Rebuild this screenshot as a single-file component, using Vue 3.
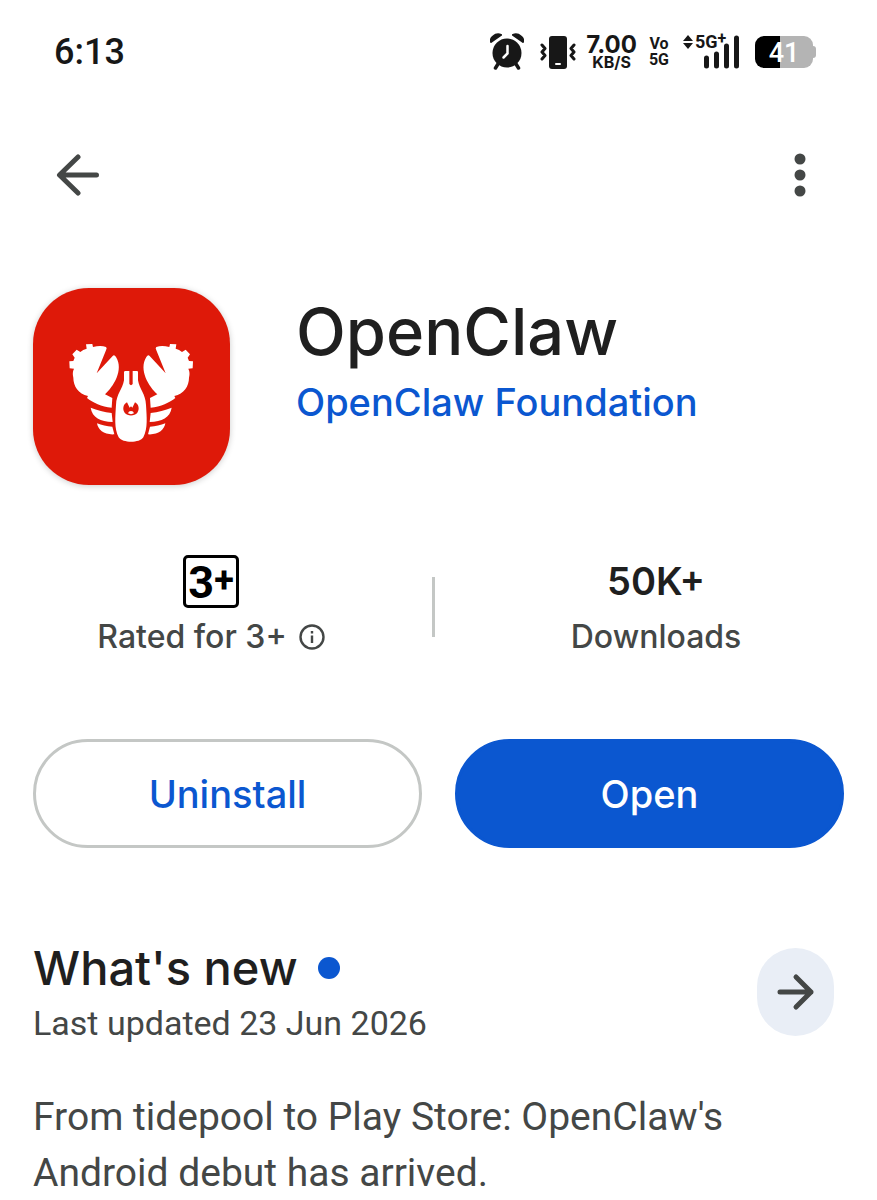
<template>
  <main class="page">
    <header class="status">
      <time class="clock">6:13</time>
      <div class="indicators">
        <svg class="alarm" viewBox="0 0 34 38" aria-label="Alarm">
          <path d="M1 9Q0 6 3 3.500Q7 0 11 2Z M33 9Q34 6 31 3.500Q27 0 23 2Z" fill="#171717" stroke="#171717" stroke-width="2" stroke-linejoin="round" />
          <path d="M8 31L5.500 35M26 31L28.500 35" stroke="#171717" stroke-width="3.500" stroke-linecap="round" />
          <circle cx="17" cy="20" r="14.500" fill="#171717" />
          <path d="M17.500 13V20.500L13.500 24.500" fill="none" stroke="#fff" stroke-width="2.500" stroke-linecap="round" />
        </svg>
        <svg class="vibrate" viewBox="0 0 36 34" aria-label="Vibrate">
          <rect x="9" y="1" width="18" height="33" rx="3" fill="#171717" />
          <rect x="15" y="28" width="6" height="2" rx="1" fill="#fff" />
          <path d="M2 10L5 13.500L2 17L5 20.500L2 24M34 10L31 13.500L34 17L31 20.500L34 24" fill="none" stroke="#171717" stroke-width="3" stroke-linecap="round" stroke-linejoin="round" />
        </svg>
        <div class="speed">
          <span class="rate">7.00</span>
          <span class="unit">KB/S</span>
        </div>
        <div class="volte">
          <span>Vo</span>
          <span>5G</span>
        </div>
        <div class="network">
          <svg class="signal" viewBox="0 0 58 36" aria-label="Signal">
            <path d="M5 1L10 7H0Z M5 15L10 9H0Z" fill="#171717" />
            <path d="M23.500 24V32M33.500 20V32M43.500 12V32M53.500 4V32" stroke="#171717" stroke-width="5" stroke-linecap="round" />
          </svg>
          <span class="generation">5G<sup>+</sup></span>
        </div>
        <div class="battery"><span>41</span></div>
      </div>
    </header>

    <nav class="toolbar">
      <button class="iconButton" type="button" aria-label="Back">
        <svg class="back" viewBox="0 0 44 44">
          <path d="M40.500 22H4M22 4L3.500 22L22 40" />
        </svg>
      </button>
      <button class="iconButton" type="button" aria-label="More options">
        <svg class="more" viewBox="0 0 12 44">
          <circle cx="6" cy="6" r="5.500" />
          <circle cx="6" cy="22" r="5.500" />
          <circle cx="6" cy="38" r="5.500" />
        </svg>
      </button>
    </nav>

    <section class="app">
      <div class="logo">
        <svg viewBox="0 0 591 591" aria-label="OpenClaw logo">
          <g transform="translate(81 141)" fill="#fff">
            <g v-for="side in sides" :key="side" :transform="side">
              <path d="M78 28L97 27L99 36Q122 30 138 36Q142 39 138 46L110 115L158 63Q163 58 168 66C192 105 160 155 135 178L157 189L155 218C125 215 98 203 81 189L84 183C55 177 40 153 40 128Q36 113 42 101L29 100L28 79L40 78L44 68L37 58L50 44L61 51Q69 44 80 41Z" />
              <path d="M92 218C112 226 132 231 155 234L158 261C121 260 97 248 92 218Z" />
              <path d="M111 265C125 270 140 274 157 275L163 298C133 300 114 285 111 265Z" />
            </g>
            <path d="M196 108H208V147Q213 154 218 147V108H231Q234 108 234 112V136C238 162 257 177 258 210C260 245 264 280 250 307C239 325 188 325 176 307C162 280 166 245 168 210C169 177 188 162 192 136V112Q192 108 196 108Z" />
            <path d="M201 202C189 208 187 224 194 233C203 244 223 244 232 233C239 224 237 208 225 202L217 218L213 214L209 218Z" fill="#de1909" />
            <path d="M204 235Q206 228 213 228Q220 228 222 235Q213 240 204 235Z" />
          </g>
        </svg>
      </div>
      <div class="names">
        <h1>OpenClaw</h1>
        <a href="#developer">OpenClaw Foundation</a>
      </div>
    </section>

    <section class="stats">
      <div class="stat rating">
        <div class="badge">3<span>+</span></div>
        <div class="label">
          Rated for 3+
          <svg class="info" viewBox="0 0 26 26" aria-label="Info">
            <circle cx="13" cy="13" r="11.500" fill="none" stroke="#444746" stroke-width="2.400" />
            <path d="M13 11.500V19M13 7V9.500" stroke="#444746" stroke-width="2.400" />
          </svg>
        </div>
      </div>
      <div class="divider"></div>
      <div class="stat downloads">
        <div class="count">50K+</div>
        <div class="label">Downloads</div>
      </div>
    </section>

    <section class="actions">
      <button class="uninstall" type="button">Uninstall</button>
      <button class="open" type="button">Open</button>
    </section>

    <section class="news">
      <div class="newsHead">
        <div>
          <h2>What's new<i class="dot"></i></h2>
          <p class="updated">Last updated 23 Jun 2026</p>
        </div>
        <button class="details" type="button" aria-label="See what's new">
          <svg viewBox="0 0 38 38">
            <path d="M3 19H34M19 4L34 19L19 34" />
          </svg>
        </button>
      </div>
      <p class="notes">From tidepool to Play Store: OpenClaw's Android debut has arrived.</p>
    </section>
  </main>
</template>

<script setup>
// 左右两侧的钳子共用同一组路径
const sides = ["translate(0 0)", "translate(427 0) scale(-1 1)"];
</script>

<style>
body {
  margin: 0;
  background: #fff;
}
</style>

<style scoped>
.page {
  font-family: Inter, "Liberation Sans", sans-serif;
  color: #1f1f1f;
  overflow: hidden;
}
h1,
h2,
p {
  margin: 0;
}
h1,
h2 {
  font-weight: 500;
}
button {
  font-family: inherit;
  border: none;
  padding: 0;
  cursor: pointer;
}
svg {
  display: block;
}
/* 状态栏 */
.status {
  height: 104px;
  padding: 0 64px 0 54px;
  display: flex;
  justify-content: space-between;
  align-items: center;
  color: #171717;
}
.clock {
  font-family: Roboto, sans-serif;
  font-size: 36px;
  font-weight: 500;
}
.indicators {
  display: flex;
  align-items: center;
}
.alarm {
  width: 34px;
  height: 38px;
  margin-right: 16px;
}
.vibrate {
  width: 36px;
  height: 34px;
  margin-right: 10px;
}
.speed,
.volte {
  display: flex;
  flex-direction: column;
  align-items: center;
  font-weight: 700;
}
.speed {
  margin-right: 12px;
}
.rate {
  font-size: 24px;
  line-height: 20px;
}
.unit {
  font-size: 16px;
  line-height: 14px;
}
.volte {
  font-family: Roboto, sans-serif;
  font-size: 16px;
  line-height: 16px;
  margin-right: 14px;
}
.network {
  position: relative;
  margin-right: 14px;
}
.signal {
  width: 58px;
  height: 36px;
}
.generation {
  position: absolute;
  left: 12px;
  top: 0;
  font-family: Roboto, sans-serif;
  font-size: 18px;
  font-weight: 700;
  line-height: 16px;
  white-space: nowrap;
}
.generation sup {
  font-size: 16px;
  line-height: 0;
  vertical-align: 4px;
}
.battery {
  position: relative;
  width: 58px;
  height: 32px;
  border-radius: 9px;
  background: linear-gradient(90deg, #000 25px, #b4b4b4 25px);
  color: #fff;
  font-family: Roboto, sans-serif;
  font-size: 27px;
  font-weight: 500;
  line-height: 34px;
  text-align: center;
}
.battery::after {
  content: "";
  position: absolute;
  left: 100%;
  top: 10px;
  width: 3px;
  height: 12px;
  border-radius: 0 3px 3px 0;
  background: #b4b4b4;
}
/* 顶部工具栏 */
.toolbar {
  height: 142px;
  padding: 0 71px 0 56px;
  display: flex;
  justify-content: space-between;
  align-items: center;
}
.iconButton {
  background: none;
}
.back {
  width: 44px;
  height: 44px;
}
.back path,
.details path {
  fill: none;
  stroke: #444746;
  stroke-width: 5;
  stroke-linecap: round;
  stroke-linejoin: round;
}
.more {
  width: 12px;
  height: 44px;
  fill: #444746;
}
/* 应用信息 */
.app {
  padding: 42px 33px 0;
  display: flex;
  gap: 66px;
}
.logo {
  flex: none;
  width: 197px;
  height: 197px;
  border-radius: 56px;
  background: #de1909;
  box-shadow: 0 1px 6px rgba(0, 0, 0, 0.2);
}
.names {
  padding-top: 6px;
}
.names h1 {
  font-size: 65px;
  line-height: 76px;
}
.names a {
  display: block;
  font-size: 38px;
  line-height: 64px;
  font-weight: 500;
  color: #0b57d0;
  text-decoration: none;
}
/* 评级与下载量 */
.stats {
  padding: 70px 33px 0;
  display: flex;
  align-items: center;
}
.stat {
  display: flex;
  flex-direction: column;
  align-items: center;
}
.rating {
  flex: 18;
}
.downloads {
  flex: 19;
}
.badge {
  box-sizing: border-box;
  width: 56px;
  height: 53px;
  display: flex;
  justify-content: center;
  border: 3px solid #000;
  border-radius: 5px;
  color: #000;
  font-family: Roboto, sans-serif;
  font-size: 45px;
  font-weight: 700;
  line-height: 50px;
}
.badge span {
  font-size: 36px;
  line-height: 44px;
}
.count {
  font-size: 38px;
  font-weight: 600;
  line-height: 53px;
}
.label {
  display: flex;
  align-items: center;
  gap: 12px;
  margin-top: 8px;
  font-size: 32px;
  line-height: 42px;
  font-weight: 500;
  color: #444746;
}
.info {
  width: 26px;
  height: 26px;
}
.divider {
  width: 3px;
  height: 60px;
  margin: 0 33px 0 43px;
  background: #c4c7c5;
}
/* 操作按钮 */
.actions {
  padding: 81px 33px 0;
  display: flex;
  gap: 33px;
}
.actions button {
  flex: 1;
  height: 109px;
  border: 3px solid #c4c7c5;
  border-radius: 55px;
  font-size: 38px;
  font-weight: 500;
}
.actions .uninstall {
  background: #fff;
  color: #0b57d0;
}
.actions .open {
  border-color: #0b57d0;
  background: #0b57d0;
  color: #fff;
}
/* 更新内容 */
.news {
  padding: 89px 33px 0;
}
.newsHead {
  display: flex;
  justify-content: space-between;
  align-items: center;
  padding-right: 10px;
}
.newsHead h2 {
  display: flex;
  align-items: center;
  gap: 20px;
  font-size: 47px;
  line-height: 62px;
}
.dot {
  width: 22px;
  height: 22px;
  border-radius: 50%;
  background: #0b57d0;
}
.updated,
.notes {
  font-family: Roboto, sans-serif;
  color: #444746;
}
.updated {
  font-size: 34px;
  line-height: 48px;
}
.details {
  width: 77px;
  height: 88px;
  border-radius: 39px;
  background: #e9eef6;
}
.details svg {
  width: 38px;
  height: 38px;
  margin: 0 auto;
}
.notes {
  margin-top: 42px;
  font-size: 39px;
  line-height: 56px;
}
</style>
